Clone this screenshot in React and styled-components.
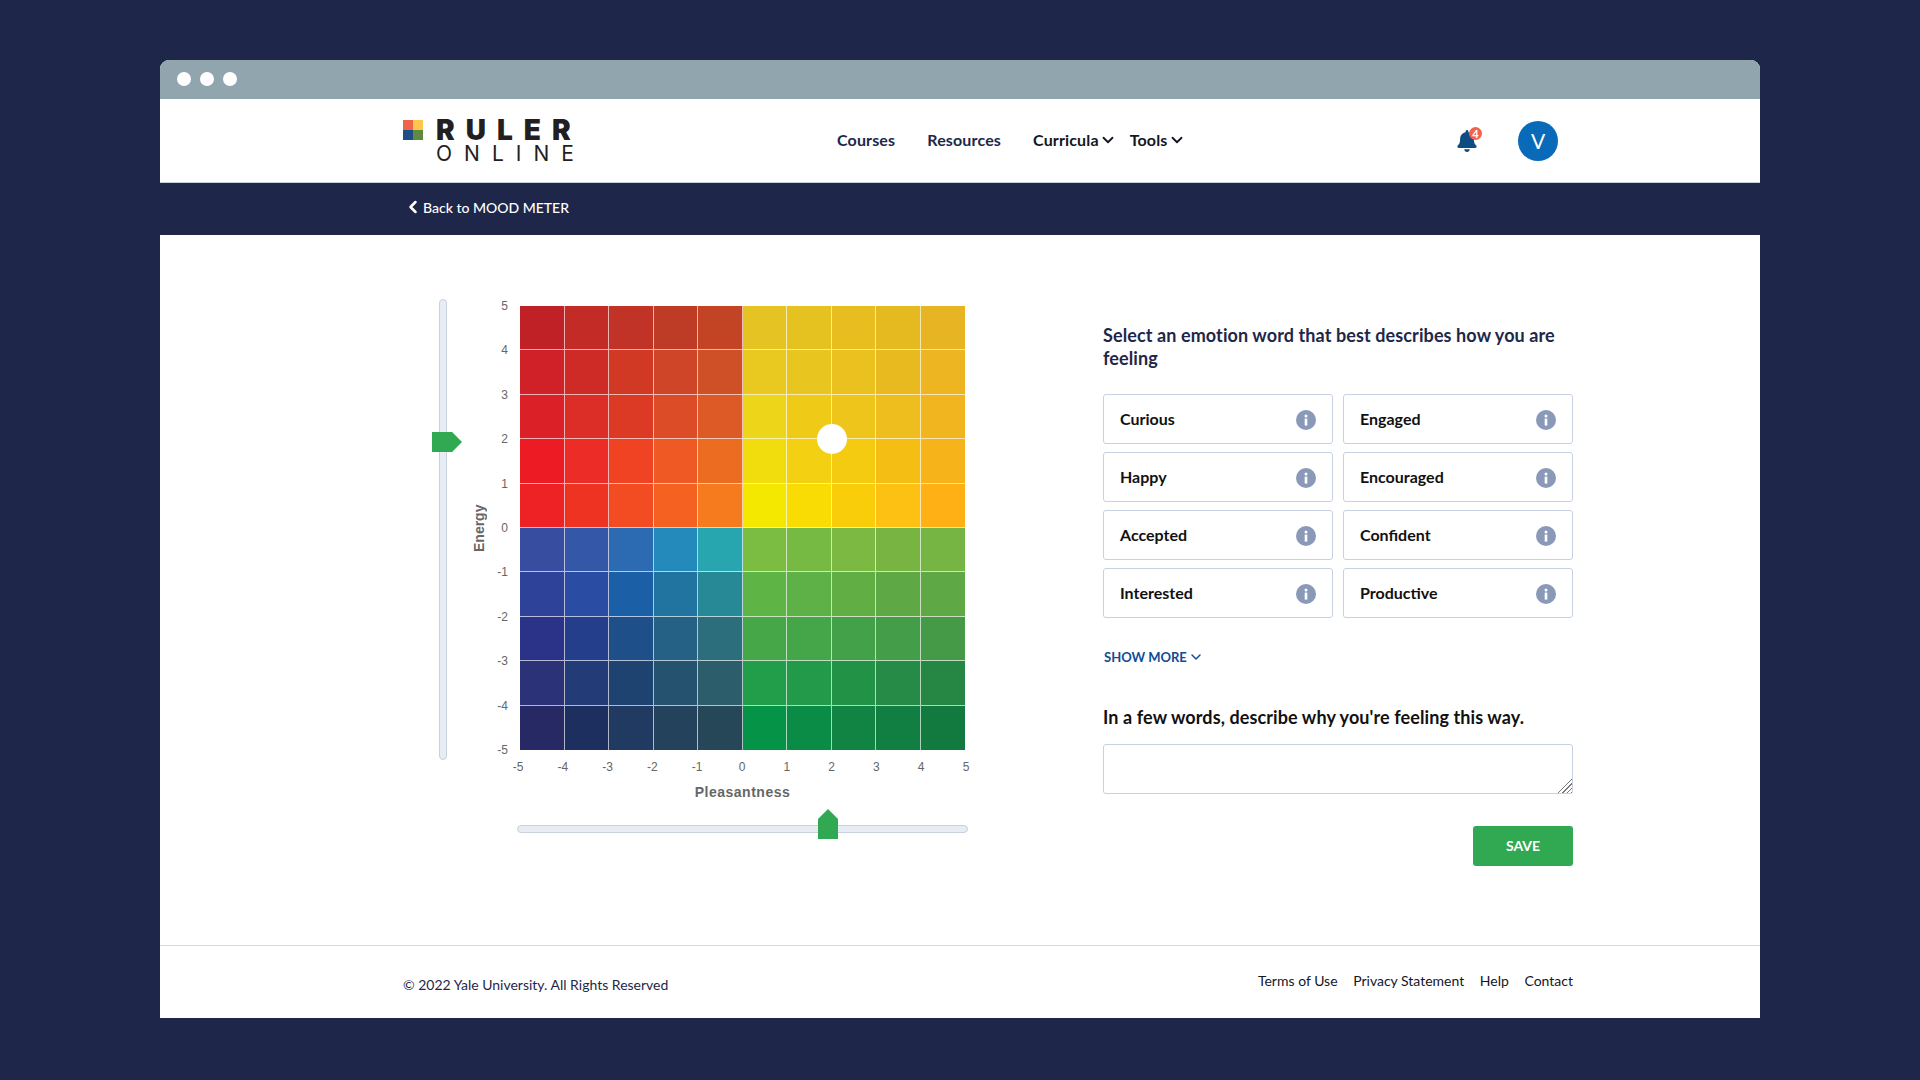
import React from "react";
import styled, { createGlobalStyle } from "styled-components";
import { ChevronDown, ChevronLeft } from "lucide-react";
import { FaBell } from "react-icons/fa";

const CELL_COLORS = [
  ["#C02126", "#C22B26", "#C13326", "#BE3B26", "#C24425", "#E5C322", "#E6C220", "#E7BD20", "#E5B920", "#E7B423"],
  ["#CF2127", "#CE2B26", "#D13925", "#CF4527", "#CF5027", "#E9C91F", "#E9C520", "#EAC11E", "#E8BA20", "#ECB521"],
  ["#DB2027", "#DC2E27", "#DC3A25", "#DC4C26", "#DD5A27", "#EDD519", "#EFCB18", "#EEC51A", "#EEBD1E", "#F1B61F"],
  ["#ED1C24", "#EC2C26", "#F04323", "#EF5923", "#EC6C22", "#F1DD0D", "#F3D012", "#F5CB12", "#F5BE14", "#F7B31A"],
  ["#EE2224", "#EF3323", "#F34B22", "#F46120", "#F67B1F", "#F4E800", "#F9DC04", "#FACD0B", "#FCC113", "#FEB014"],
  ["#374DA0", "#3557A8", "#2C6AB1", "#248ABB", "#27A6B0", "#7BBC42", "#77BA43", "#7BB943", "#77B442", "#76B443"],
  ["#2E429A", "#2A4CA3", "#1B5FA7", "#21749F", "#288996", "#5FB446", "#5DB147", "#61AE45", "#5EA946", "#5EA845"],
  ["#2B3388", "#243E8C", "#1E4F88", "#256184", "#2C6E7B", "#46A749", "#45A649", "#43A249", "#439D49", "#459A48"],
  ["#2B3277", "#233C77", "#1F4371", "#25526F", "#2B5D6A", "#229E4A", "#229A4A", "#229247", "#268B46", "#258743"],
  ["#262963", "#1D2F5F", "#213A61", "#25425D", "#264758", "#059347", "#0A8C46", "#118443", "#117F41", "#137A3F"],
];

const EMOTIONS = ["Curious", "Engaged", "Happy", "Encouraged", "Accepted", "Confident", "Interested", "Productive"];
const Y_TICKS = [5, 4, 3, 2, 1, 0, -1, -2, -3, -4, -5];
const X_TICKS = [-5, -4, -3, -2, -1, 0, 1, 2, 3, 4, 5];

const InfoIcon = () => (
  <InfoSvg width="20" height="20" viewBox="0 0 20 20">
    <circle cx="10" cy="10" r="10" fill="#8A99B8" />
    <circle cx="10" cy="6" r="1.5" fill="#fff" />
    <rect x="8.7" y="8.6" width="2.6" height="7" fill="#fff" />
  </InfoSvg>
);

export default function App() {
  return (
    <>
      <GlobalStyle />
      <Window>
        <TitleBar>
          <Dot />
          <Dot />
          <Dot />
        </TitleBar>
        <Header>
          <Logo>
            <LogoMark>
              <LogoSquare $color="#F0654A" />
              <LogoSquare $color="#FDC64E" />
              <LogoSquare $color="#1F4E86" />
              <LogoSquare $color="#5F8B40" />
            </LogoMark>
            <LogoWords>
              <LogoRuler>RULER</LogoRuler>
              <LogoOnline>ONLINE</LogoOnline>
            </LogoWords>
          </Logo>
          <Nav>
            <NavLink>Courses</NavLink>
            <NavLink>Resources</NavLink>
            <NavMenu>
              <NavMenuItem>
                Curricula <ChevronDown size={18} strokeWidth={2.4} />
              </NavMenuItem>
              <NavMenuItem>
                Tools <ChevronDown size={18} strokeWidth={2.4} />
              </NavMenuItem>
            </NavMenu>
          </Nav>
          <HeaderRight>
            <BellWrap>
              <FaBell size={22} color="#0F4C81" />
              <Badge>4</Badge>
            </BellWrap>
            <Avatar>V</Avatar>
          </HeaderRight>
        </Header>
        <BackBar>
          <ChevronLeft size={20} strokeWidth={3} />
          Back to MOOD METER
        </BackBar>
        <Main>
          <ChartArea>
            <VerticalSlider>
              <VerticalTrack />
              <VerticalThumb />
            </VerticalSlider>
            <ChartBody>
              <ChartRow>
                <EnergyLabel>Energy</EnergyLabel>
                <YTicks>
                  {Y_TICKS.map((tick) => (
                    <Tick key={tick}>{tick}</Tick>
                  ))}
                </YTicks>
                <Grid>
                  {CELL_COLORS.flat().map((color, i) => (
                    <Cell key={i} $color={color} />
                  ))}
                  <Marker />
                </Grid>
              </ChartRow>
              <XTicks>
                {X_TICKS.map((tick) => (
                  <XTick key={tick}>{tick}</XTick>
                ))}
              </XTicks>
              <PleasantLabel>Pleasantness</PleasantLabel>
              <HorizontalSlider>
                <HorizontalTrack />
                <HorizontalThumb />
              </HorizontalSlider>
            </ChartBody>
          </ChartArea>
          <Form>
            <Question>Select an emotion word that best describes how you are feeling</Question>
            <Words>
              {EMOTIONS.map((word) => (
                <WordButton key={word}>
                  {word}
                  <InfoIcon />
                </WordButton>
              ))}
            </Words>
            <ShowMore>
              SHOW MORE <ChevronDown size={16} strokeWidth={2.2} />
            </ShowMore>
            <Describe>In a few words, describe why you're feeling this way.</Describe>
            <Reason />
            <SaveButton>SAVE</SaveButton>
          </Form>
        </Main>
        <Footer>
          <Copyright>© 2022 Yale University. All Rights Reserved</Copyright>
          <FooterLinks>
            <FooterLink>Terms of Use</FooterLink>
            <FooterLink>Privacy Statement</FooterLink>
            <FooterLink>Help</FooterLink>
            <FooterLink>Contact</FooterLink>
          </FooterLinks>
        </Footer>
      </Window>
    </>
  );
}

const GlobalStyle = createGlobalStyle`
  html, body {
    margin: 0;
    height: 100%;
    overflow: hidden;
    background: #1E2649;
  }
  body {
    font-family: "Lato", "Liberation Sans", sans-serif;
    padding-top: 60px;
    box-sizing: border-box;
  }
  * {
    box-sizing: border-box;
  }
`;

const Window = styled.div`
  width: 1600px;
  height: 958px;
  margin-left: 160px;
  display: flex;
  flex-direction: column;
  background: #fff;
  border-radius: 9px 9px 0 0;
  overflow: hidden;
`;

const TitleBar = styled.div`
  height: 39px;
  flex: none;
  display: flex;
  align-items: center;
  gap: 9px;
  padding: 0 0 1px 17px;
  background: #91A5AE;
`;

const Dot = styled.span`
  width: 14px;
  height: 14px;
  border-radius: 50%;
  background: #fff;
`;

const Header = styled.header`
  height: 84px;
  flex: none;
  display: flex;
  align-items: center;
  padding: 0 202px 0 243px;
  border-bottom: 1px solid #C8D1DE;
`;

const Logo = styled.div`
  width: 171px;
  display: flex;
  gap: 13px;
  align-items: flex-start;
`;

const LogoMark = styled.div`
  width: 20px;
  height: 20px;
  flex: none;
  display: grid;
  grid-template-columns: 1fr 1fr;
`;

const LogoSquare = styled.span`
  background: ${(p) => p.$color};
`;

const LogoWords = styled.div`
  display: flex;
  flex-direction: column;
  gap: 6px;
  color: #231F20;
  font-family: "Inter", sans-serif;
`;

const LogoRuler = styled.div`
  font-size: 28px;
  line-height: 20px;
  font-weight: 900;
  letter-spacing: 11px;
  white-space: nowrap;
`;

const LogoOnline = styled.div`
  font-size: 21px;
  line-height: 15px;
  font-weight: 400;
  letter-spacing: 12px;
  white-space: nowrap;
`;

const Nav = styled.nav`
  margin-left: 263px;
  padding-bottom: 2px;
  display: flex;
  align-items: center;
  gap: 32px;
`;

const NavLink = styled.a`
  font-size: 16px;
  font-weight: 700;
  letter-spacing: 0.15px;
  color: #1E2749;
`;

const NavMenu = styled.div`
  display: flex;
  gap: 13px;
`;

const NavMenuItem = styled.a`
  display: flex;
  align-items: center;
  font-size: 16px;
  font-weight: 700;
  letter-spacing: 0.15px;
  color: #14161f;
`;

const HeaderRight = styled.div`
  margin-left: auto;
  display: flex;
  align-items: center;
  gap: 40px;
`;

const BellWrap = styled.div`
  position: relative;
  height: 22px;
  display: flex;
`;

const Badge = styled.span`
  position: absolute;
  top: -3px;
  right: -4px;
  width: 13px;
  height: 13px;
  border-radius: 50%;
  background: #F0654A;
  color: #fff;
  font-size: 11px;
  font-weight: 700;
  line-height: 13px;
  text-align: center;
`;

const Avatar = styled.div`
  width: 40px;
  height: 40px;
  border-radius: 50%;
  background: #0A6ABA;
  color: #fff;
  font-size: 21px;
  line-height: 40px;
  text-align: center;
`;

const BackBar = styled.div`
  height: 52px;
  flex: none;
  display: flex;
  align-items: center;
  padding: 0 0 4px 243px;
  background: #1E2749;
  color: #fff;
  font-size: 14px;
  font-weight: 500;
`;

const Main = styled.main`
  flex: 1;
  display: flex;
  justify-content: space-between;
  padding: 64px 187px 0 272px;
`;

const ChartArea = styled.div`
  display: flex;
  align-items: flex-start;
`;

const VerticalSlider = styled.div`
  position: relative;
  width: 30px;
  height: 461px;
  padding-left: 7px;
`;

const VerticalTrack = styled.div`
  width: 8px;
  height: 100%;
  background: #E8ECF3;
  border: 1px solid #C8D1DE;
  border-radius: 4px;
`;

const VerticalThumb = styled.div`
  position: absolute;
  left: 0;
  top: 133px;
  width: 30px;
  height: 20px;
  background: #31A952;
  clip-path: polygon(0 0, 67% 0, 100% 50%, 67% 100%, 0 100%);
`;

const ChartBody = styled.div`
  display: flex;
  flex-direction: column;
  margin-top: 7px;
`;

const ChartRow = styled.div`
  display: flex;
  align-items: stretch;
`;

const EnergyLabel = styled.div`
  width: 28px;
  padding-right: 9px;
  writing-mode: vertical-rl;
  transform: rotate(180deg);
  text-align: center;
  font-family: "Liberation Sans", sans-serif;
  font-size: 14px;
  font-weight: 700;
  line-height: 16px;
  color: #666;
`;

const YTicks = styled.div`
  width: 18px;
  height: 458px;
  margin: -7px 12px -7px 0;
  display: flex;
  flex-direction: column;
  justify-content: space-between;
  align-items: flex-end;
`;

const Tick = styled.span`
  font-family: "Liberation Sans", sans-serif;
  font-size: 12px;
  line-height: 14px;
  color: #666;
`;

const Grid = styled.div`
  position: relative;
  width: 445px;
  height: 444px;
  display: grid;
  grid-template-columns: repeat(10, 1fr);
  grid-template-rows: repeat(10, 1fr);
`;

const Cell = styled.div`
  background: ${(p) => p.$color};
  border-right: 1px solid rgba(255, 255, 255, 0.65);
  border-bottom: 1px solid rgba(255, 255, 255, 0.65);

  &:nth-child(10n) {
    border-right: none;
  }
  &:nth-child(n + 91) {
    border-bottom: none;
  }
`;

const Marker = styled.div`
  position: absolute;
  left: 297px;
  top: 118px;
  width: 30px;
  height: 30px;
  border-radius: 50%;
  background: #fff;
`;

const XTicks = styled.div`
  width: 464px;
  margin: 10px 0 0 48px;
  display: flex;
  justify-content: space-between;
`;

const XTick = styled.span`
  width: 16px;
  text-align: center;
  font-family: "Liberation Sans", sans-serif;
  font-size: 12px;
  line-height: 14px;
  color: #666;
`;

const PleasantLabel = styled.div`
  margin: 10px 0 0 58px;
  width: 445px;
  text-align: center;
  font-family: "Liberation Sans", sans-serif;
  font-size: 14px;
  font-weight: 700;
  line-height: 16px;
  letter-spacing: 0.5px;
  color: #666;
`;

const HorizontalSlider = styled.div`
  position: relative;
  width: 451px;
  height: 30px;
  margin: 9px 0 0 55px;
  padding-top: 16px;
`;

const HorizontalTrack = styled.div`
  height: 8px;
  background: #E8ECF3;
  border: 1px solid #C8D1DE;
  border-radius: 4px;
`;

const HorizontalThumb = styled.div`
  position: absolute;
  left: 301px;
  top: 0;
  width: 20px;
  height: 30px;
  background: #31A952;
  clip-path: polygon(50% 0, 100% 33%, 100% 100%, 0 100%, 0 33%);
`;

const Form = styled.div`
  width: 470px;
  margin-top: 25px;
  display: flex;
  flex-direction: column;
`;

const Question = styled.div`
  font-size: 18px;
  line-height: 23px;
  font-weight: 700;
  letter-spacing: 0.1px;
  color: #1E2749;
`;

const Words = styled.div`
  margin-top: 24px;
  display: grid;
  grid-template-columns: 230px 230px;
  grid-auto-rows: 50px;
  gap: 8px 10px;
`;

const WordButton = styled.div`
  display: flex;
  align-items: center;
  justify-content: space-between;
  padding: 0 16px 2px;
  border: 1px solid #C8D1E0;
  border-radius: 3px;
  font-size: 16px;
  font-weight: 700;
  color: #111;
`;

const InfoSvg = styled.svg`
  margin-top: 4px;
`;

const ShowMore = styled.div`
  margin-top: 31px;
  padding-left: 1px;
  display: flex;
  align-items: center;
  gap: 1px;
  font-size: 13px;
  line-height: 16px;
  font-weight: 700;
  color: #0F4C97;
`;

const Describe = styled.div`
  margin-top: 41px;
  font-size: 18px;
  line-height: 22px;
  font-weight: 700;
  letter-spacing: 0.1px;
  color: #111;
`;

const Reason = styled.textarea`
  margin: 16px 0 0;
  width: 470px;
  height: 50px;
  border: 1px solid #C8D1E0;
  border-radius: 3px;
  outline: none;

  &::-webkit-resizer {
    background:
      linear-gradient(135deg, #fff 50%, transparent 50%),
      repeating-linear-gradient(135deg, #fff 0, #fff 2px, #777 2px, #777 3px);
  }
`;

const SaveButton = styled.button`
  margin-top: 32px;
  align-self: flex-end;
  width: 100px;
  height: 40px;
  padding: 0 0 2px;
  border: none;
  border-radius: 3px;
  background: #31A952;
  color: #fff;
  font-family: inherit;
  font-size: 14px;
  font-weight: 700;
`;

const Footer = styled.footer`
  height: 73px;
  flex: none;
  display: flex;
  align-items: center;
  justify-content: space-between;
  padding: 0 187px 4px 243px;
  border-top: 1px solid #D3DAE3;
`;

const Copyright = styled.div`
  margin-top: 8px;
  font-size: 14px;
  color: #1E2749;
`;

const FooterLinks = styled.div`
  display: flex;
  gap: 15.6px;
`;

const FooterLink = styled.a`
  font-size: 14px;
  color: #14161f;
`;
